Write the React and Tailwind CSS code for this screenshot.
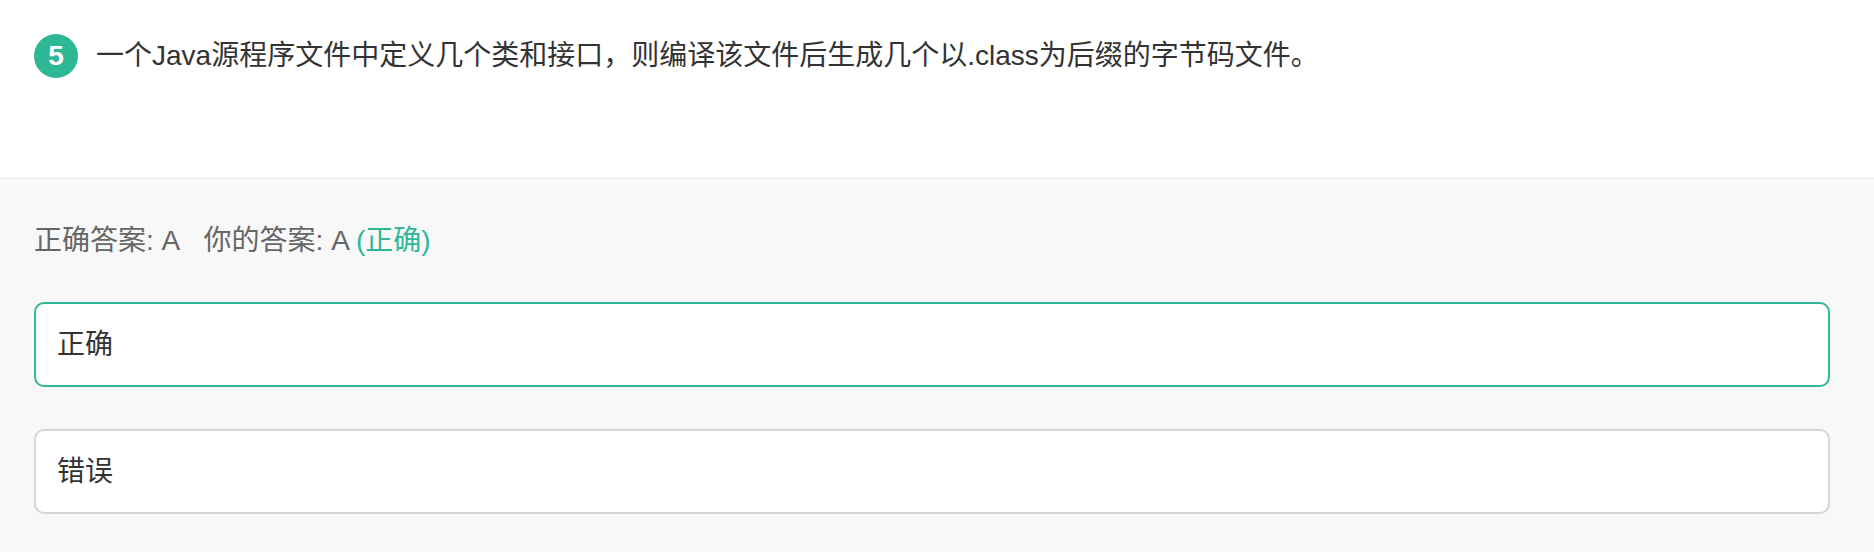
import React from "react";

const font = { fontFamily: "'Liberation Sans', 'Noto Sans CJK SC', sans-serif" };

const options = [
  { key: "A", label: "正确", correct: true },
  { key: "B", label: "错误", correct: false },
];

export default function App() {
  return (
    <div className="w-full min-h-[552px] bg-[#f8f8f8]" style={font}>
      {/* Question */}
      <div className="bg-white border-b border-[#e9e9e9] pl-[34px] pr-[44px] pt-[34px] h-[179px]">
        <div className="flex items-center gap-[18px]">
          <span className="flex items-center justify-center w-[44px] h-[44px] rounded-full bg-[#2eb795] text-white text-[28px] font-bold shrink-0">
            5
          </span>
          <p className="text-[28px] leading-[44px] text-[#333]">
            一个Java源程序文件中定义几个类和接口，则编译该文件后生成几个以.class为后缀的字节码文件。
          </p>
        </div>
      </div>

      {/* Answer */}
      <div className="pl-[34px] pr-[44px] pt-[42px] pb-[39px]">
        <p className="text-[28px] leading-[40px] text-[#666]">
          正确答案: A&nbsp;&nbsp;&nbsp;你的答案: A <span className="text-[#2eb795]">(正确)</span>
        </p>
        <div className="mt-[41px] flex flex-col gap-[42px]">
          {options.map((o) => (
            <div
              key={o.key}
              className={`h-[85px] flex items-center px-[21px] bg-white rounded-[10px] border-2 text-[28px] text-[#333] ${
                o.correct ? "border-[#2eb795]" : "border-[#d6d6d6]"
              }`}
            >
              {o.label}
            </div>
          ))}
        </div>
      </div>
    </div>
  );
}
